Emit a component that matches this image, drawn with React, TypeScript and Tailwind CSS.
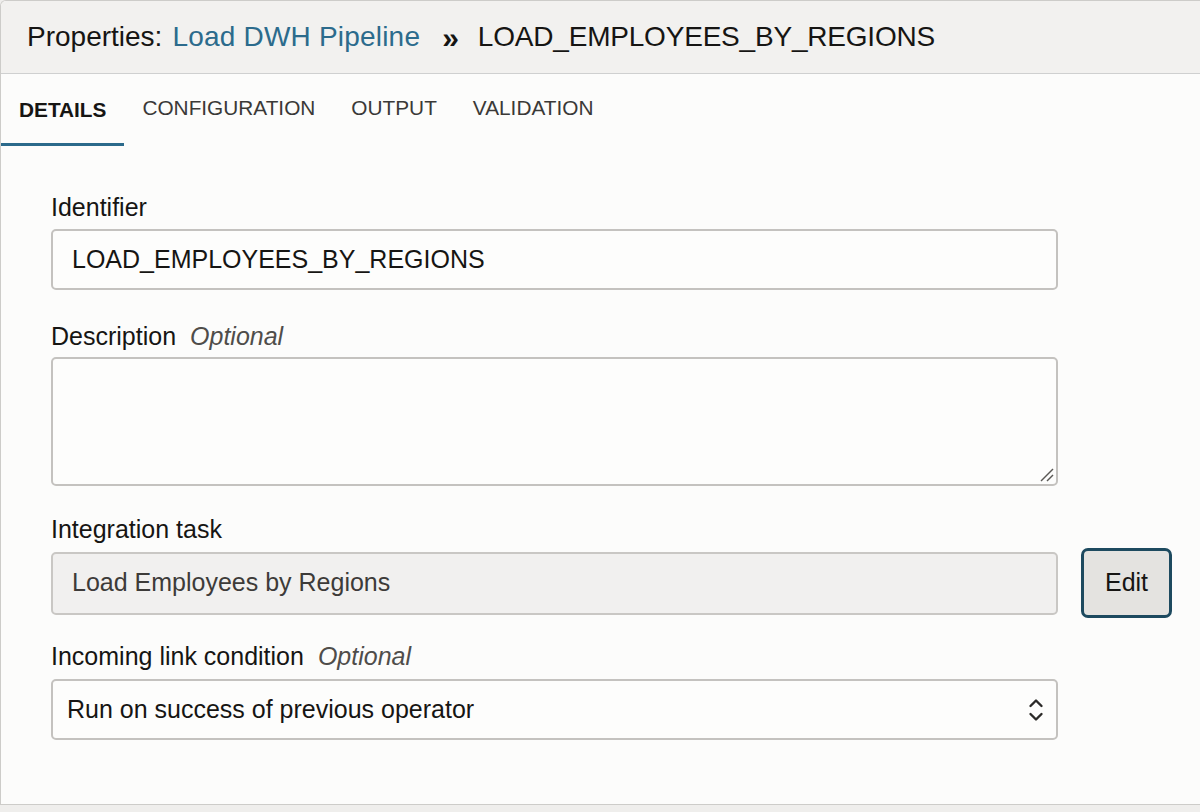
import { useState } from "react";

const tabs = ["DETAILS", "CONFIGURATION", "OUTPUT", "VALIDATION"];

function Label({ text, optional }: { text: string; optional?: boolean }) {
  return (
    <div className="flex h-[25px] items-baseline gap-[14px] text-[25px] leading-[25px] text-[#161513]">
      <span>{text}</span>
      {optional && <span className="italic text-[#4f4d4a]">Optional</span>}
    </div>
  );
}

export default function App() {
  const [tab, setTab] = useState("DETAILS");

  return (
    <div
      className="h-[812px] w-[1200px] overflow-hidden bg-[#efeeec] text-[#161513]"
      style={{ fontFamily: '"Liberation Sans", Arial, sans-serif' }}
    >
      <div className="flex h-[805px] flex-col overflow-hidden rounded-tl-[6px] border-t border-b border-l border-[#cdccc9] bg-[#fcfcfb]">
        {/* header */}
        <div className="flex h-[73px] shrink-0 items-center border-b border-[#cfd0d0] bg-[#f2f1ef] pl-[26px] text-[28px]">
          <span>Properties:</span>
          <span className="ml-[10px] tracking-[0.2px] text-[#2c6b8c]">Load DWH Pipeline</span>
          <span className="ml-[22px] text-[30px] font-bold">»</span>
          <span className="ml-[19px] tracking-[-0.2px]">LOAD_EMPLOYEES_BY_REGIONS</span>
        </div>

        {/* tabs */}
        <div className="flex h-[72px] shrink-0 items-stretch">
          {tabs.map((t) => {
            const active = t === tab;
            return (
              <button
                key={t}
                onClick={() => setTab(t)}
                className={
                  active
                    ? "flex items-center border-b-[3px] border-[#2b6a8b] px-[18px] pt-[2px] text-[20.8px] font-bold text-[#161513]"
                    : "flex items-center border-b-[3px] border-transparent px-[18px] pb-[2px] text-[20.8px] text-[#3a3937]"
                }
              >
                {t}
              </button>
            );
          })}
        </div>

        {/* form */}
        <div className="flex flex-col pl-[50px] pt-[49px]">
          <Label text="Identifier" />
          <div className="mt-[9px] flex h-[61px] w-[1007px] items-center rounded-[5px] border-2 border-[#c4c2bf] bg-[#fdfdfc] pl-[19px] text-[25px]">
            LOAD_EMPLOYEES_BY_REGIONS
          </div>

          <div className="mt-[34px]">
            <Label text="Description" optional />
          </div>
          <div className="relative mt-[8px] h-[129px] w-[1007px] rounded-[5px] border-2 border-[#c4c2bf] bg-[#fdfdfc]">
            <svg className="absolute bottom-[2px] right-[2px]" width="16" height="16" viewBox="0 0 16 16">
              <path d="M15 3 L3 15" stroke="#5a5855" strokeWidth="1.4" />
              <path d="M15 9 L9 15" stroke="#5a5855" strokeWidth="1.4" />
            </svg>
          </div>

          <div className="mt-[31px]">
            <Label text="Integration task" />
          </div>
          <div className="mt-[6px] flex items-center gap-[23px]">
            <div className="flex h-[63px] w-[1007px] items-center rounded-[5px] border-2 border-[#c9c7c4] bg-[#f1f0ef] pl-[19px] text-[25px] text-[#3d3b39]">
              Load Employees by Regions
            </div>
            <button className="flex h-[70px] w-[91px] items-center justify-center rounded-[7px] border-[3px] border-[#1d4a5f] bg-[#e4e3e0] text-[25px] text-[#161513]">
              Edit
            </button>
          </div>

          <div className="mt-[26px]">
            <Label text="Incoming link condition" optional />
          </div>
          <div className="mt-[10px] flex h-[61px] w-[1007px] items-center justify-between rounded-[5px] border-2 border-[#c4c2bf] bg-[#fdfdfc] pl-[14px] pr-[12px] text-[25px]">
            <span>Run on success of previous operator</span>
            <svg width="16" height="28" viewBox="0 0 16 28" fill="none">
              <path d="M2.5 10 L8 4.5 L13.5 10" stroke="#2b2a28" strokeWidth="2.4" strokeLinecap="round" strokeLinejoin="round" />
              <path d="M2.5 18 L8 23.5 L13.5 18" stroke="#2b2a28" strokeWidth="2.4" strokeLinecap="round" strokeLinejoin="round" />
            </svg>
          </div>
        </div>
      </div>
    </div>
  );
}
